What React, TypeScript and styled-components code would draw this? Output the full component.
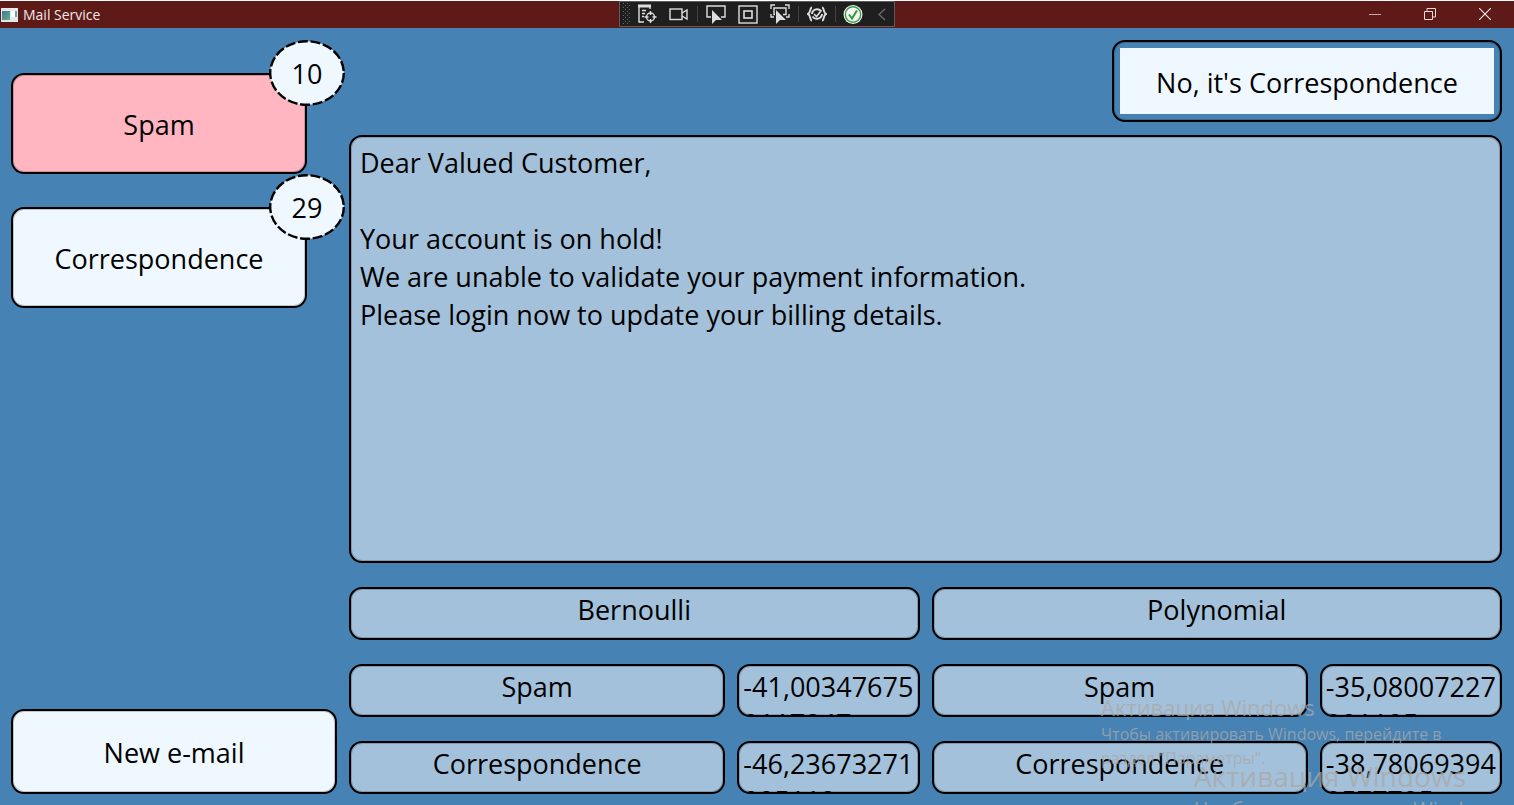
import React from "react";
import styled, { createGlobalStyle, css } from "styled-components";

const ink = "#000000";
const pale = "#f0f8ff";
const glass = "#a3c1da";

const outline = css`
  border: 2px solid ${ink};
  border-radius: 13px;
  box-shadow: inset 0 0 0 1px rgba(0, 0, 0, 0.2);
`;

const GlobalStyle = createGlobalStyle`
  * { box-sizing: border-box; }
  body {
    margin: 0;
    background: #4682b4;
    color: ${ink};
    font-family: "Segoe UI", "Open Sans", "Noto Sans", sans-serif;
    font-size: 27px;
    line-height: 38px;
  }
  button { font: inherit; color: inherit; cursor: pointer; }
`;

const Window = styled.div`
  position: relative;
  display: flex;
  flex-direction: column;
  min-height: 100vh;
  overflow: hidden;
`;

const TitleBar = styled.header`
  display: grid;
  grid-template-columns: 1fr auto 1fr;
  height: 28px;
  border-top: 1px solid #ffffff;
  background: #5d1a17;
  color: #f1e8e8;
`;

const AppTitle = styled.h1`
  display: flex;
  align-items: center;
  gap: 5px;
  margin: 0;
  padding-left: 1px;
  font-size: 14px;
  line-height: 20px;
  font-weight: 400;
`;

const DebugBar = styled.div`
  display: flex;
  align-items: center;
  width: 276px;
  height: 26px;
  border: 1px solid #5c5c5c;
  background: #1f1f1f;
`;

const ToolButton = styled.button<{ $width: number }>`
  display: flex;
  align-items: center;
  justify-content: center;
  width: ${(p) => p.$width}px;
  height: 24px;
  padding: 0;
  border: 0;
  background: none;
`;

const Divider = styled.span`
  width: 1px;
  height: 16px;
  margin: 0 2px;
  background: #424242;
`;

const Caption = styled.div`
  display: flex;
  justify-content: flex-end;
  padding-right: 2px;
`;

const CaptionButton = styled.button`
  display: flex;
  align-items: center;
  justify-content: center;
  width: 55px;
  padding: 0 0 2px;
  border: 0;
  background: none;
`;

const Workspace = styled.div`
  flex: 1;
  display: grid;
  grid-template-columns: 326px minmax(0, 1fr);
  gap: 12px;
  padding: 12px 12px 11px 11px;
`;

const Sidebar = styled.nav`
  display: flex;
  flex-direction: column;
  gap: 33px;
  padding-top: 33px;
`;

const Folder = styled.div`
  position: relative;
  width: 296px;
`;

const BoxButton = styled.button<{ $height: number; $fill?: string }>`
  ${outline}
  width: 100%;
  height: ${(p) => p.$height}px;
  padding: 3px 0 0;
  background: ${(p) => p.$fill ?? pale};
`;

const NewMail = styled.div`
  margin-top: auto;
`;

const Badge = styled.span`
  position: absolute;
  top: -33px;
  right: -38px;
  display: grid;
  place-items: center;
  width: 76px;
  height: 66px;
`;

const BadgeRing = styled.svg`
  grid-area: 1 / 1;
`;

const BadgeCount = styled.span`
  grid-area: 1 / 1;
  z-index: 1;
  padding-top: 2px;
`;

const Reader = styled.main`
  display: flex;
  flex-direction: column;
`;

const MoveButton = styled.button`
  ${outline}
  align-self: flex-end;
  width: 390px;
  height: 82px;
  padding: 6px;
  background: none;
`;

const MoveLabel = styled.span`
  display: flex;
  align-items: center;
  justify-content: center;
  height: 100%;
  padding-top: 4px;
  background: ${pale};
`;

const Message = styled.article`
  ${outline}
  flex: 1;
  margin: 13px 0 24px;
  padding: 7px 9px;
  background: ${glass};
  white-space: pre-line;
`;

const Models = styled.div`
  display: grid;
  grid-template-columns: 1fr 1fr;
  gap: 12px;
`;

const Cell = styled.div`
  ${outline}
  height: 53px;
  margin: 0;
  padding: 2px 4px 0;
  overflow: hidden;
  background: ${glass};
  font-size: 27px;
  font-weight: 400;
  text-align: center;
`;

const Value = styled(Cell)`
  line-height: 37px;
  text-align: left;
  word-break: break-all;
`;

const Scores = styled.dl`
  display: grid;
  grid-template-columns: 376fr 182fr;
  gap: 24px 12px;
  margin: 24px 0 0;
`;

const Notice = styled.aside<{ $left: number; $top: number; $large?: boolean }>`
  position: absolute;
  left: ${(p) => p.$left}px;
  top: ${(p) => p.$top}px;
  width: ${(p) => (p.$large ? 480 : 380)}px;
  font-size: ${(p) => (p.$large ? 21 : 16)}px;
  line-height: ${(p) => (p.$large ? 30 : 24)}px;
  color: rgba(170, 168, 168, 0.75);
  pointer-events: none;
`;

const NoticeTitle = styled.p<{ $large?: boolean }>`
  margin: 0;
  font-size: ${(p) => (p.$large ? 28 : 22)}px;
  line-height: ${(p) => (p.$large ? 38 : 30)}px;
`;

const NoticeText = styled.p`
  margin: 0;
`;

const folders = [
  { name: "Spam", count: 10, fill: "#ffb6c1" },
  { name: "Correspondence", count: 29, fill: pale },
];

const models = [
  {
    name: "Bernoulli",
    scores: [
      ["Spam", "-41,003476759117847"],
      ["Correspondence", "-46,23673271005119"],
    ],
  },
  {
    name: "Polynomial",
    scores: [
      ["Spam", "-35,08007227901105"],
      ["Correspondence", "-38,780693949577795"],
    ],
  },
];

const letter = `Dear Valued Customer,

Your account is on hold!
We are unable to validate your payment information.
Please login now to update your billing details.`;

const AppIcon = () => (
  <svg width="17" height="14" viewBox="0 0 17 14" aria-hidden="true">
    <defs>
      <linearGradient id="pane" x1="0" y1="0" x2="1" y2="1">
        <stop offset="0" stopColor="#3c78a0" />
        <stop offset="1" stopColor="#62b08a" />
      </linearGradient>
    </defs>
    <rect width="17" height="14" fill="#e4e8ea" />
    <rect x="1" y="3" width="8" height="9" fill="url(#pane)" />
    <rect x="10" y="3" width="4" height="6" fill="#fff" />
    <rect x="14" y="3" width="2" height="6" fill="#6aa89c" />
  </svg>
);

const Grip = () => (
  <svg width="8" height="22" viewBox="0 0 8 22" aria-hidden="true">
    {Array.from({ length: 11 }, (_, r) =>
      [0, 1].map((c) => (
        <rect key={`${r}-${c}`} x={1 + c * 4 + (r % 2) * 2} y={r * 2} width="1" height="1" fill="#6a6a6a" />
      )),
    )}
  </svg>
);

const ic = { width: 20, height: 20, viewBox: "0 0 20 20", fill: "none", stroke: "#dedede", strokeWidth: 1.4 };
const arrow = "M6 6v14l4-4h6z";

const TreeIcon = () => (
  <svg {...ic}>
    <path d="M1 2h13" strokeWidth="3" />
    <path d="M2 3v15h5M5 6.500h4M5 9.500h3M5 12.500h2M13 3v2" />
    <circle cx="13.500" cy="13" r="4" />
    <path d="M13.500 7v4M13.500 15v4M7.500 13h4M15.500 13h4" />
  </svg>
);
const CameraIcon = () => (
  <svg {...ic}>
    <rect x="1" y="5" width="12" height="10.500" />
    <path d="M13 9l5-3v9l-5-3" />
  </svg>
);
const SelectIcon = () => (
  <svg {...ic}>
    <path d="M5 13H1V2h18v11h-4" />
    <path d={arrow} fill="#dedede" stroke="none" />
  </svg>
);
const LayoutIcon = () => (
  <svg {...ic}>
    <rect x="1" y="2" width="18" height="17" />
    <rect x="6" y="7" width="8" height="7" strokeWidth="1.600" />
  </svg>
);
const TrackIcon = () => (
  <svg {...ic}>
    <path d="M1 5V1h4M15 1h4v4M1 10v3h3M19 10v3h-3M5 10.500H4V4h12v6.500h-3" />
    <path d={arrow} fill="#dedede" stroke="none" />
  </svg>
);
const ReloadIcon = () => (
  <svg {...ic}>
    <path d="M5 3.500C2.500 3.500 4 9 1 10c3 1 1.500 6.500 4 6.500M15 3.500c2.500 0 1 5.500 4 6.500-3 1-1.500 6.500-4 6.500" strokeWidth="1.900" />
    <path d="M14.500 7.500a5.200 5.200 0 0 0-9.500 2.500M5.500 12.500a5.200 5.200 0 0 0 9.500-2.500" strokeWidth="2" />
    <path d="M7 10l2.500 2.500 4-5" strokeWidth="1.600" />
  </svg>
);
const CheckIcon = () => (
  <svg {...ic}>
    <circle cx="10" cy="10.500" r="9.500" fill="#f4f4f4" stroke="none" />
    <circle cx="10" cy="10.500" r="7.700" fill="#f4f4f4" stroke="#3aa040" />
    <path d="M6 10.500l3 4 5-8" stroke="#2f9a36" strokeWidth="2" />
  </svg>
);
const ChevronIcon = () => (
  <svg {...ic} stroke="#6a6a6a">
    <path d="M14 5l-6 5.500 6 5.500" />
  </svg>
);

export default function App() {
  return (
    <>
      <GlobalStyle />
      <Window>
        <TitleBar>
          <AppTitle>
            <AppIcon />
            Mail Service
          </AppTitle>
          <DebugBar role="toolbar" aria-label="Debug tools">
            <ToolButton $width={11} aria-label="Move toolbar"><Grip /></ToolButton>
            <ToolButton $width={32} aria-label="Go to live visual tree"><TreeIcon /></ToolButton>
            <ToolButton $width={32} aria-label="Record"><CameraIcon /></ToolButton>
            <Divider />
            <ToolButton $width={32} aria-label="Select element"><SelectIcon /></ToolButton>
            <ToolButton $width={32} aria-label="Display layout adorners"><LayoutIcon /></ToolButton>
            <ToolButton $width={32} aria-label="Track focused element"><TrackIcon /></ToolButton>
            <Divider />
            <ToolButton $width={32} aria-label="Hot reload settings"><ReloadIcon /></ToolButton>
            <Divider />
            <ToolButton $width={30} aria-label="Hot reload available"><CheckIcon /></ToolButton>
            <ToolButton $width={26} aria-label="Collapse toolbar"><ChevronIcon /></ToolButton>
          </DebugBar>
          <Caption>
            <CaptionButton aria-label="Minimize">
              <svg width="12" height="12" viewBox="0 0 12 12"><path d="M0 6.500h12" stroke="#c9a9a8" /></svg>
            </CaptionButton>
            <CaptionButton aria-label="Restore">
              <svg width="12" height="12" viewBox="0 0 12 12" fill="none" stroke="#e8d8d8">
                <path d="M.5 3.500h8v8h-8zM3 3.500V.5h8.500V9h-3" />
              </svg>
            </CaptionButton>
            <CaptionButton aria-label="Close">
              <svg width="12" height="12" viewBox="0 0 12 12"><path d="M0 0l12 12M12 0L0 12" stroke="#f0e6e6" strokeWidth="1.200" /></svg>
            </CaptionButton>
          </Caption>
        </TitleBar>
        <Workspace>
          <Sidebar>
            {folders.map((f) => (
              <Folder key={f.name}>
                <BoxButton $height={101} $fill={f.fill}>{f.name}</BoxButton>
                <Badge>
                  <BadgeRing width="76" height="66" viewBox="0 0 76 66" aria-hidden="true">
                    <ellipse cx="38" cy="33" rx="36.800" ry="31.800" fill={pale} stroke={ink} strokeWidth="2.400" strokeDasharray="10 2.700" />
                  </BadgeRing>
                  <BadgeCount>{f.count}</BadgeCount>
                </Badge>
              </Folder>
            ))}
            <NewMail>
              <BoxButton $height={85}>New e-mail</BoxButton>
            </NewMail>
          </Sidebar>
          <Reader>
            <MoveButton>
              <MoveLabel>No, it's Correspondence</MoveLabel>
            </MoveButton>
            <Message>{letter}</Message>
            <Models>
              {models.map((m) => (
                <section key={m.name}>
                  <Cell as="h2">{m.name}</Cell>
                  <Scores>
                    {m.scores.map(([label, value]) => (
                      <React.Fragment key={label}>
                        <Cell as="dt">{label}</Cell>
                        <Value as="dd">{value}</Value>
                      </React.Fragment>
                    ))}
                  </Scores>
                </section>
              ))}
            </Models>
          </Reader>
        </Workspace>
        <Notice $left={1101} $top={692}>
          <NoticeTitle>Активация Windows</NoticeTitle>
          <NoticeText>Чтобы активировать Windows, перейдите в раздел "Параметры".</NoticeText>
        </Notice>
        <Notice $left={1194} $top={757} $large>
          <NoticeTitle $large>Активация Windows</NoticeTitle>
          <NoticeText>Чтобы активировать Windows, перейдите в раздел "Параметры".</NoticeText>
        </Notice>
      </Window>
    </>
  );
}
